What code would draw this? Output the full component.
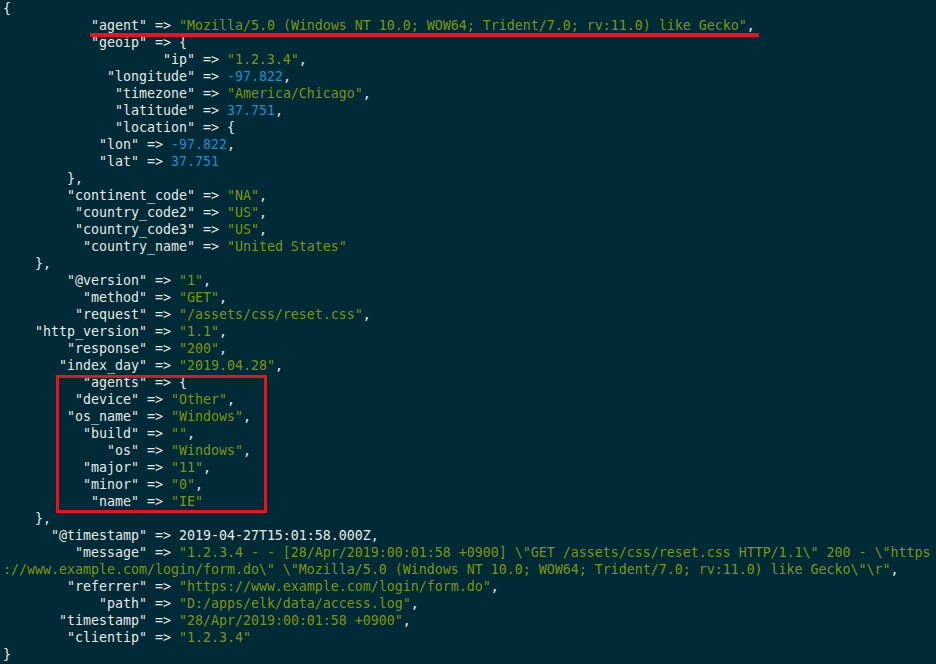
import React from 'react';

type Seg = { t: string; c?: 'k' | 's' | 'n' };
type Line = { indent: number; segs: Seg[] };

const k = (t: string): Seg => ({ t, c: 'k' });
const s = (t: string): Seg => ({ t, c: 's' });
const n = (t: string): Seg => ({ t, c: 'n' });

const pair = (indent: number, key: string, val?: Seg, tail = ','): Line => ({
  indent,
  segs: val ? [k(`"${key}" => `), val, k(tail)] : [k(`"${key}" => {`)],
});

const lines: Line[] = [
  { indent: 0, segs: [k('{')] },
  pair(11, 'agent', s('"Mozilla/5.0 (Windows NT 10.0; WOW64; Trident/7.0; rv:11.0) like Gecko"')),
  pair(11, 'geoip'),
  pair(20, 'ip', s('"1.2.3.4"')),
  pair(13, 'longitude', n('-97.822')),
  pair(14, 'timezone', s('"America/Chicago"')),
  pair(14, 'latitude', n('37.751')),
  pair(14, 'location'),
  pair(12, 'lon', n('-97.822')),
  pair(12, 'lat', n('37.751'), ''),
  { indent: 8, segs: [k('},')] },
  pair(8, 'continent_code', s('"NA"')),
  pair(9, 'country_code2', s('"US"')),
  pair(9, 'country_code3', s('"US"')),
  pair(10, 'country_name', s('"United States"'), ''),
  { indent: 4, segs: [k('},')] },
  pair(8, '@version', s('"1"')),
  pair(10, 'method', s('"GET"')),
  pair(9, 'request', s('"/assets/css/reset.css"')),
  pair(4, 'http_version', s('"1.1"')),
  pair(8, 'response', s('"200"')),
  pair(7, 'index_day', s('"2019.04.28"')),
  pair(10, 'agents'),
  pair(9, 'device', s('"Other"')),
  pair(8, 'os_name', s('"Windows"')),
  pair(10, 'build', s('""')),
  pair(13, 'os', s('"Windows"')),
  pair(10, 'major', s('"11"')),
  pair(10, 'minor', s('"0"')),
  pair(11, 'name', s('"IE"'), ''),
  { indent: 4, segs: [k('},')] },
  pair(6, '@timestamp', k('2019-04-27T15:01:58.000Z')),
  {
    indent: 9,
    segs: [
      k('"message" => '),
      s('"1.2.3.4 - - [28/Apr/2019:00:01:58 +0900] \\"GET /assets/css/reset.css HTTP/1.1\\" 200 - \\"https'),
    ],
  },
  {
    indent: 0,
    segs: [
      s('://www.example.com/login/form.do\\" \\"Mozilla/5.0 (Windows NT 10.0; WOW64; Trident/7.0; rv:11.0) like Gecko\\"\\r"'),
      k(','),
    ],
  },
  pair(8, 'referrer', s('"https://www.example.com/login/form.do"')),
  pair(12, 'path', s('"D:/apps/elk/data/access.log"')),
  pair(7, 'timestamp', s('"28/Apr/2019:00:01:58 +0900"')),
  pair(8, 'clientip', s('"1.2.3.4"'), ''),
  { indent: 0, segs: [k('}')] },
];

const colorOf = (c?: Seg['c']) =>
  c === 's' ? 'text-[#7d9412]' : c === 'n' ? 'text-[#268bd2]' : 'text-[#e8e8e8]';

export default function App() {
  return (
    <div className="relative w-[936px] h-[664px] overflow-hidden bg-[#002b36] pl-[3px] font-['DejaVu_Sans_Mono',monospace] text-[13.29px]">
      {lines.map((line, i) => (
        <div key={i} className="h-[17px] leading-[17px] whitespace-pre">
          {' '.repeat(line.indent)}
          {line.segs.map((seg, j) => (
            <span key={j} className={colorOf(seg.c)}>
              {seg.t}
            </span>
          ))}
        </div>
      ))}

      {/* annotations drawn over the terminal */}
      <div className="absolute left-[90px] top-[33px] w-[669px] h-[4px] bg-[#e8141c]" />
      <div className="absolute left-[56px] top-[375px] w-[211px] h-[138px] border-[3px] border-[#e8141c]" />
    </div>
  );
}
